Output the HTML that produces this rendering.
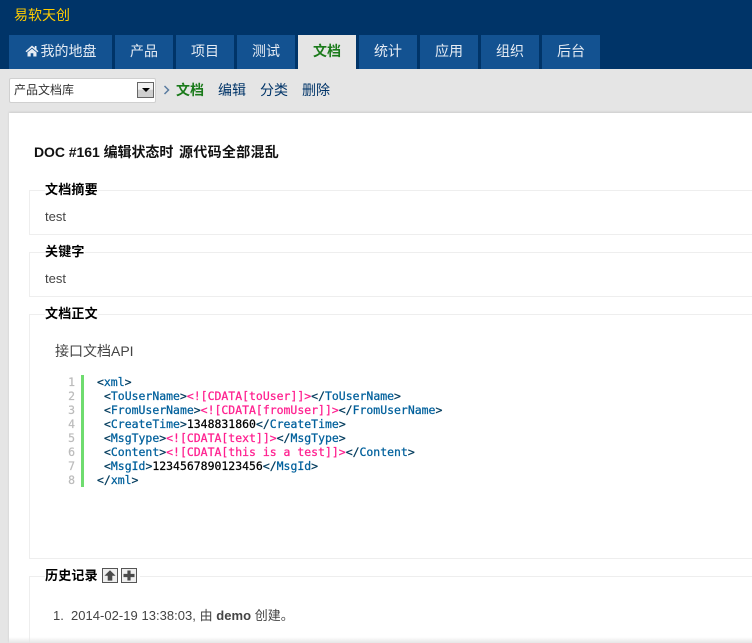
<!DOCTYPE html>
<html><head><meta charset="utf-8"><style>
html,body{margin:0;padding:0;width:752px;height:643px;overflow:hidden;background:#e5e5e5}
body{position:relative;font-family:"Liberation Sans","WenQuanYi Zen Hei","Noto Sans CJK SC",sans-serif;font-size:13px;color:#333}
div,span.a{position:absolute;white-space:nowrap}
.tab{top:35px;height:34px;line-height:33px;background:#135291;color:#e6ecf4;text-align:center;font-size:14px}
.sub{top:81px;height:18px;line-height:18px;font-size:14px;color:#003468}
.fs{left:29px;width:740px;border:1px solid #eeeeee;background:#fff;box-sizing:border-box}
.lg{left:45px;font-size:13px;font-weight:bold;color:#000;background:#fff;line-height:16px;height:16px;letter-spacing:.2px}
.t{left:45px;font-size:13px;color:#444;line-height:16px}
.code{font-family:"DejaVu Sans Mono","Liberation Mono",monospace;font-size:11.47px;line-height:14px;height:14px;color:#000;-webkit-text-stroke:.25px}
.n{left:60px;width:15px;text-align:right;color:#bbb;font-family:"DejaVu Sans Mono",monospace;font-size:11.47px;line-height:14px;-webkit-text-stroke:.2px}
.k{color:#00609c}.p{color:#ff1f8f}.g{color:#003a5c}
.ib{width:16px;height:15px;border:1px solid #555;background:#efefef;box-sizing:border-box}
</style></head><body>
<div style="left:0;top:0;width:752px;height:69px;background:#003468"></div>
<div style="left:14px;top:7px;line-height:16px;font-size:14px;color:#ffcc00">易软天创</div>
<div class="tab" style="left:9px;width:103px"><svg width="14" height="12" viewBox="0 0 14 12" style="vertical-align:-1px;margin-right:2px"><path d="M7 0.5L0.5 6.2 1.5 7.2 7 2.6 12.5 7.2 13.5 6.2 11.5 4.4V1H9.8V2.9Z" fill="#e6ecf4"/><path d="M2.5 7.4L7 3.7 11.5 7.4V11.5H8.3V8.2H5.7V11.5H2.5Z" fill="#e6ecf4"/></svg>我的地盘</div>
<div class="tab" style="left:115px;width:58px">产品</div>
<div class="tab" style="left:176px;width:58px">项目</div>
<div class="tab" style="left:237px;width:58px">测试</div>
<div class="tab" style="left:298px;width:58px;background:#e5e5e5;color:#1a7a1a;font-weight:bold">文档</div>
<div class="tab" style="left:359px;width:58px">统计</div>
<div class="tab" style="left:420px;width:58px">应用</div>
<div class="tab" style="left:481px;width:58px">组织</div>
<div class="tab" style="left:542px;width:58px">后台</div>

<div style="left:9px;top:78px;width:147px;height:25px;background:#fff;border:1px solid #d0d0d0;border-radius:2px;box-sizing:border-box"></div>
<div style="left:14px;top:82px;font-size:12px;line-height:16px;color:#333">产品文档库</div>
<div style="left:137px;top:82px;width:17px;height:16px;border:1px solid #666;box-sizing:border-box;background:linear-gradient(#f2f2f2 45%,#cfcfcf 50%)"></div>
<div style="left:142px;top:88px;width:0;height:0;border-left:4px solid transparent;border-right:4px solid transparent;border-top:4px solid #000"></div>
<svg width="8" height="10" viewBox="0 0 8 10" style="position:absolute;left:163px;top:85px"><path d="M1.5 1L5.5 5 1.5 9" fill="none" stroke="#5a7ca0" stroke-width="1.5"/></svg>
<div class="sub" style="left:176px;color:#1a7a1a;font-weight:bold">文档</div>
<div class="sub" style="left:218px">编辑</div>
<div class="sub" style="left:260px">分类</div>
<div class="sub" style="left:302px">删除</div>

<div style="left:9px;top:113px;width:743px;height:530px;background:#fff;box-shadow:0 -1px 2px #ccc"></div>
<div style="left:34px;top:144px;font-size:14px;font-weight:bold;color:#111;line-height:17px;letter-spacing:-.05px">DOC #161 编辑状态时</div>
<div style="left:179px;top:144px;font-size:14px;font-weight:bold;color:#111;line-height:17px;letter-spacing:.3px">源代码全部混乱</div>

<div class="fs" style="top:190px;height:45px"></div>
<div class="lg" style="top:182px">文档摘要</div>
<div class="t" style="top:209px">test</div>
<div class="fs" style="top:252px;height:45px"></div>
<div class="lg" style="top:244px">关键字</div>
<div class="t" style="top:271px">test</div>
<div class="fs" style="top:314px;height:245px"></div>
<div class="lg" style="top:306px">文档正文</div>
<div style="left:55px;top:342px;font-size:14px;line-height:18px;color:#444">接口文档API</div>

<div style="left:81px;top:375px;width:3px;height:112px;background:#6fdc6f"></div>
<div class="n" style="top:375px">1</div>
<div class="n" style="top:389px">2</div>
<div class="n" style="top:403px">3</div>
<div class="n" style="top:417px">4</div>
<div class="n" style="top:431px">5</div>
<div class="n" style="top:445px">6</div>
<div class="n" style="top:459px">7</div>
<div class="n" style="top:473px">8</div>
<div class="code" style="left:97px;top:375px"><span class="g">&lt;</span><span class="k">xml</span><span class="g">&gt;</span></div>
<div class="code" style="left:104px;top:389px"><span class="g">&lt;</span><span class="k">ToUserName</span><span class="g">&gt;</span><span class="p">&lt;![CDATA[toUser]]&gt;</span><span class="g">&lt;/</span><span class="k">ToUserName</span><span class="g">&gt;</span></div>
<div class="code" style="left:104px;top:403px"><span class="g">&lt;</span><span class="k">FromUserName</span><span class="g">&gt;</span><span class="p">&lt;![CDATA[fromUser]]&gt;</span><span class="g">&lt;/</span><span class="k">FromUserName</span><span class="g">&gt;</span></div>
<div class="code" style="left:104px;top:417px"><span class="g">&lt;</span><span class="k">CreateTime</span><span class="g">&gt;</span>1348831860<span class="g">&lt;/</span><span class="k">CreateTime</span><span class="g">&gt;</span></div>
<div class="code" style="left:104px;top:431px"><span class="g">&lt;</span><span class="k">MsgType</span><span class="g">&gt;</span><span class="p">&lt;![CDATA[text]]&gt;</span><span class="g">&lt;/</span><span class="k">MsgType</span><span class="g">&gt;</span></div>
<div class="code" style="left:104px;top:445px"><span class="g">&lt;</span><span class="k">Content</span><span class="g">&gt;</span><span class="p">&lt;![CDATA[this is a test]]&gt;</span><span class="g">&lt;/</span><span class="k">Content</span><span class="g">&gt;</span></div>
<div class="code" style="left:104px;top:459px"><span class="g">&lt;</span><span class="k">MsgId</span><span class="g">&gt;</span>1234567890123456<span class="g">&lt;/</span><span class="k">MsgId</span><span class="g">&gt;</span></div>
<div class="code" style="left:97px;top:473px"><span class="g">&lt;/</span><span class="k">xml</span><span class="g">&gt;</span></div>

<div class="fs" style="top:576px;height:80px"></div>
<div class="lg" style="top:568px;width:57px">历史记录</div>
<div style="left:100px;top:567px;width:40px;height:17px;background:#fff"></div>
<div class="ib" style="left:102px;top:568px"></div>
<svg width="14" height="13" viewBox="0 0 14 13" style="position:absolute;left:103px;top:569px"><path d="M7 1.2L12.6 6.8H9.3V11.6H4.7V6.8H1.4Z" fill="#4a4a4a"/></svg>
<div class="ib" style="left:121px;top:568px"></div>
<svg width="14" height="13" viewBox="0 0 14 13" style="position:absolute;left:122px;top:569px"><path d="M5.4 1.5H8.6V4.9H12.5V8.1H8.6V11.5H5.4V8.1H1.5V4.9H5.4Z" fill="#4a4a4a"/></svg>
<div style="left:53px;top:608px;font-size:13px;line-height:16px;color:#444">1.</div>
<div style="left:71px;top:608px;font-size:13px;line-height:16px;color:#444;letter-spacing:.03px">2014-02-19 13:38:03, 由 <b>demo</b> 创建。</div>
<div style="left:9px;top:637px;width:743px;height:6px;background:linear-gradient(rgba(229,229,229,0),#e6e6e6)"></div>
</body></html>
